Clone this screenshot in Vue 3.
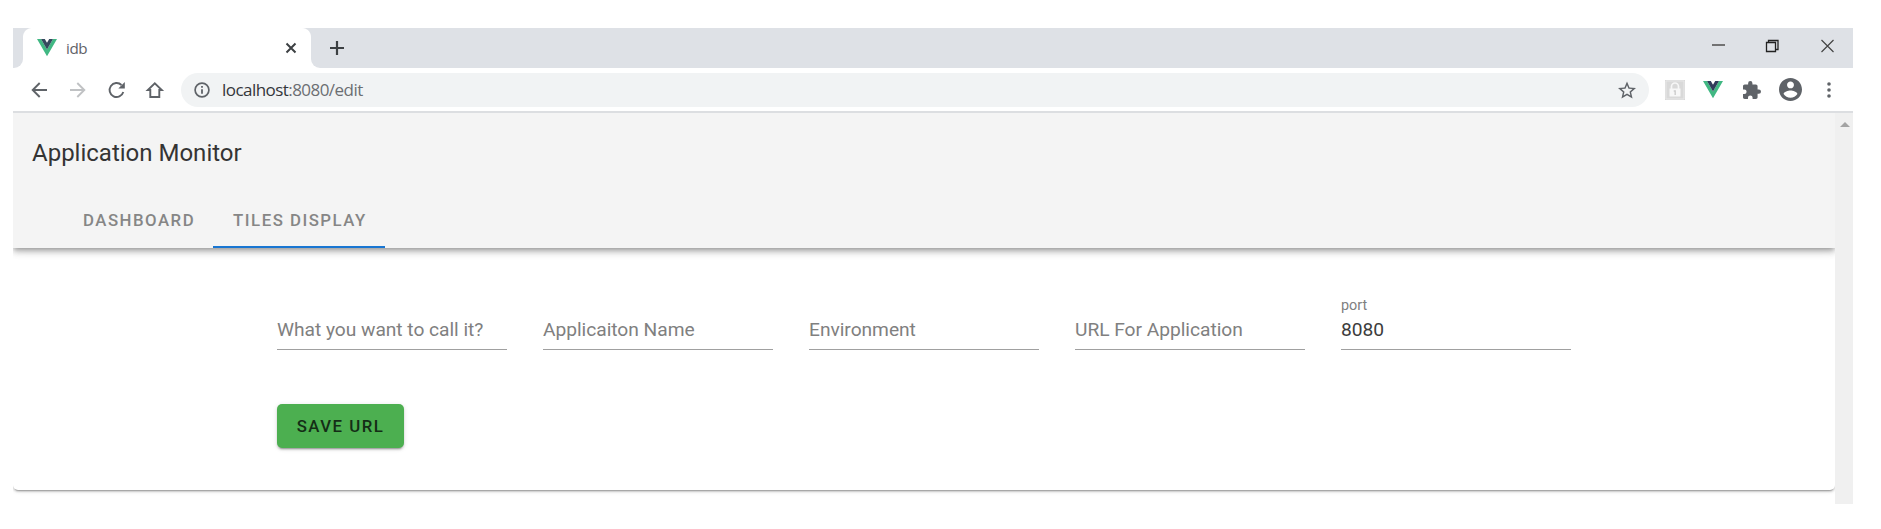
<script setup>
const fields = [
  { label: 'What you want to call it?' },
  { label: 'Applicaiton Name' },
  { label: 'Environment' },
  { label: 'URL For Application' },
  { label: 'port', value: '8080' },
]
</script>

<template>
  <div class="window">
    <div class="strip">
      <div class="corner"></div>
      <div class="tab">
        <svg class="vue" width="20" height="18" viewBox="0 0 20 18"><path fill="#41b883" d="M0 0h4l6 10.400L16 0h4L10 17.300z" /><path fill="#35495e" d="M4 0h3.800L10 3.800 12.200 0H16l-6 10.400z" /></svg>
        <span class="tab-name">idb</span>
        <svg class="close" width="12" height="12" viewBox="0 0 12 12"><path d="M1.500 1.500l9 9M10.500 1.500l-9 9" stroke="#3c4043" stroke-width="2" /></svg>
      </div>
      <div class="strip-rest">
        <svg class="plus" width="16" height="16" viewBox="0 0 16 16"><path d="M8 1v14M1 8h14" stroke="#3c4043" stroke-width="2.200" /></svg>
        <svg class="controls" width="126" height="16" viewBox="0 0 126 16" fill="none" stroke="#222">
          <path d="M1 7h13" stroke="#666" stroke-width="1.800" />
          <path d="M55.500 4.500h9v9h-9zM57.500 4.500v-2h9.500v9h-2.500" stroke-width="1.300" />
          <path d="M110.500 2l12 12M122.500 2l-12 12" stroke="#444" stroke-width="1.200" />
        </svg>
      </div>
    </div>

    <div class="toolbar">
      <svg class="nav" width="140" height="22" viewBox="0 0 140 22" fill="none" stroke="#5f6368" stroke-width="1.900">
        <path d="M16 11H2M8.700 4L1.700 11l7 7" />
        <path d="M39 11h14M46.300 4l7 7-7 7" stroke="#c0c2c4" />
        <path d="M90.500 6A7 7 0 1 0 92.300 13" />
        <path d="M93.800 3v6.500h-6.500z" fill="#5f6368" stroke="none" />
        <path d="M116.800 11h2.500v7h9v-7h2.500l-7-6.800z" />
      </svg>
      <div class="omnibox">
        <svg width="16" height="16" viewBox="0 0 16 16"><circle cx="8" cy="8" r="6.900" fill="none" stroke="#5f6368" stroke-width="1.700" /><path d="M8 7.200v4.500M8 4v1.800" stroke="#5f6368" stroke-width="1.800" /></svg>
        <span class="url"><b>localhost</b>:8080/edit</span>
        <svg class="star" width="18" height="18" viewBox="2 1.500 20 20"><path fill="#5f6368" d="M22 9.240l-7.190-.62L12 2 9.190 8.630 2 9.240l5.460 4.730L5.820 21 12 17.270 18.180 21l-1.630-7.030L22 9.240zM12 15.400l-3.760 2.270 1-4.280-3.320-2.880 4.380-.38L12 6.100l1.710 4.040 4.380.38-3.320 2.880 1 4.280L12 15.400z" /></svg>
      </div>
      <svg class="lock" width="20" height="20" viewBox="0 0 20 20">
        <path fill="#d9d9d9" d="M0 0h20v20H0z" />
        <path d="M6.500 9V6.500a3.500 3.500 0 0 1 7 0V9" fill="none" stroke="#f7f7f7" stroke-width="1.700" />
        <path fill="#f7f7f7" d="M4.500 8.500h11v8h-11z" /><path d="M8.700 11h1.500v4" fill="none" stroke="#ccc" stroke-width="1.400" />
        <path d="M1 1h18v18H1z" fill="none" stroke="#e8e8e8" />
      </svg>
      <svg class="vue ext" width="20" height="18" viewBox="0 0 20 18"><path fill="#41b883" d="M0 0h4l6 10.400L16 0h4L10 17.300z" /><path fill="#303b5b" d="M4 0h3.800L10 3.800 12.200 0H16l-6 10.400z" /></svg>
      <svg class="puzzle" width="18" height="18" viewBox="2 1 21 21"><path fill="#5f6368" d="M20.500 11H19V7c0-1.100-.9-2-2-2h-4V3.500a2.500 2.500 0 0 0-5 0V5H4c-1.100 0-1.990.9-1.990 2v3.800H3.500a2.700 2.700 0 0 1 0 5.400H2V20c0 1.100.9 2 2 2h3.800v-1.500a2.700 2.700 0 0 1 5.400 0V22H17c1.100 0 2-.9 2-2v-4h1.500a2.500 2.500 0 0 0 0-5z" /></svg>
      <svg class="person" width="23" height="23" viewBox="2 2 20 20"><path fill="#5f6368" d="M12 2C6.480 2 2 6.480 2 12s4.480 10 10 10 10-4.480 10-10S17.520 2 12 2zm0 3c1.660 0 3 1.340 3 3s-1.340 3-3 3-3-1.340-3-3 1.340-3 3-3zm0 14.200c-2.500 0-4.710-1.280-6-3.220.03-1.990 4-3.080 6-3.080 1.990 0 5.970 1.090 6 3.080-1.290 1.940-3.500 3.220-6 3.220z" /></svg>
      <svg class="dots" width="4" height="16" viewBox="0 0 4 16" fill="#5f6368"><circle cx="2" cy="2" r="1.800" /><circle cx="2" cy="8" r="1.800" /><circle cx="2" cy="14" r="1.800" /></svg>
    </div>

    <div class="viewport">
      <div class="page">
        <header>
          <h1>Application Monitor</h1>
          <nav><a>DASHBOARD</a><a class="active">TILES DISPLAY</a></nav>
        </header>
        <main>
          <form>
            <label v-for="field in fields" :key="field.label" :class="['field', { filled: field.value }]">
              <span class="label">{{ field.label }}</span>
              <span v-if="field.value" class="value">{{ field.value }}</span>
            </label>
          </form>
          <button type="button">SAVE URL</button>
        </main>
      </div>
      <div class="scrollbar"><svg width="10" height="5" viewBox="0 0 10 5"><path d="M0 5l5-5 5 5z" fill="#a3a3a3" /></svg></div>
    </div>
  </div>
</template>

<style>
body { margin: 0; background: #fff; }
</style>

<style scoped>
* { box-sizing: border-box; }
svg { display: block; flex: none; }
.window { width: 1840px; margin: 28px 0 0 13px; font-family: Roboto, sans-serif; }
.strip { display: flex; height: 40px; background: #fff; }
.corner { width: 10px; background: #dee1e6; border-bottom-right-radius: 9px; }
.tab { width: 288px; display: flex; align-items: center; padding: 0 14px; background: radial-gradient(circle at 9px 9px, #fff 8.500px, #dee1e6 9.500px) 0 0 / 9px 9px no-repeat, radial-gradient(circle at 0 9px, #fff 8.500px, #dee1e6 9.500px) 100% 0 / 9px 9px no-repeat; }
.tab-name { margin: 0 auto 0 9px; font: 15.200px/20px "Open Sans", sans-serif; letter-spacing: -.4px; color: #5f6368; }
.strip-rest { flex: 1; display: flex; align-items: center; justify-content: space-between; padding: 0 16px 0 18px; background: #dee1e6; border-bottom-left-radius: 9px; }
.controls { position: relative; top: -2px; }
.toolbar { height: 45px; display: flex; align-items: center; padding-left: 18px; border-bottom: 2px solid #dcdee1; }
.nav { margin-right: 10px; }
.omnibox { width: 1468px; height: 34px; display: flex; align-items: center; padding: 0 13px; border-radius: 17px; background: #f1f3f4; }
.url { margin: 0 auto 0 12px; font: 17px/24px "Open Sans", sans-serif; letter-spacing: -.55px; color: #6b6e72; }
.url b { font-weight: 400; color: #34363a; }
.lock { margin-left: 16px; }
.ext { margin-left: 18px; }
.puzzle { margin-left: 20px; }
.person { margin-left: 18px; }
.dots { margin-left: 25px; }
.viewport { display: flex; height: 391px; }
.page { width: 1822px; overflow: hidden; background: #fff; }
header { position: relative; height: 135px; background: #f4f4f4; box-shadow: 0 2px 5px -1px rgba(0,0,0,.3), 0 5px 6px rgba(0,0,0,.14), 0 1px 12px rgba(0,0,0,.1); }
h1 { margin: 0; padding: 23px 0 0 19px; height: 77px; font-size: 24px; line-height: 34px; font-weight: 400; letter-spacing: 0; color: #343434; }
nav { display: flex; height: 58px; padding-left: 50px; }
nav a { display: flex; align-items: center; padding: 3px 18px 0 20px; font-size: 16.800px; font-weight: 500; letter-spacing: 1.500px; color: #868686; border-bottom: 2px solid transparent; }
nav .active { border-color: #1976d2; }
main { height: 242px; padding: 41px 0 0 264px; border-radius: 0 0 5px 5px; background: #fff; box-shadow: 0 3px 1px -2px rgba(0,0,0,.2), 0 2px 2px rgba(0,0,0,.14), 0 1px 5px rgba(0,0,0,.12); }
form { display: flex; gap: 36px; height: 115px; }
.field { width: 230px; height: 61px; padding-top: 29px; display: flex; flex-direction: column; border-bottom: 1px solid #a0a0a0; font-size: 19.200px; line-height: 24px; letter-spacing: -.03px; color: #808080; }
.field.filled { padding-top: 8px; }
.filled .label { height: 21px; font-size: 14.400px; line-height: 18px; }
.value { color: #3c3c3c; }
button { display: block; width: 127px; height: 44px; padding: 0; border: 0; border-radius: 5px; background: #4caf50; color: #142d16; font: 500 16.800px/44px Roboto, sans-serif; letter-spacing: 1.500px; box-shadow: 0 3px 1px -2px rgba(0,0,0,.2), 0 2px 2px rgba(0,0,0,.14), 0 1px 5px rgba(0,0,0,.12); }
.scrollbar { width: 18px; padding: 9px 0 0 5px; background: #f0f0f0; }
</style>
